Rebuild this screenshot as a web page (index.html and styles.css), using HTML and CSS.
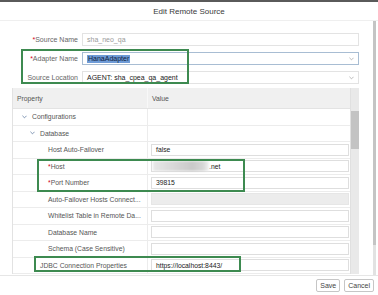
FILE: index.html
```html
<!DOCTYPE html>
<html>
<head>
<meta charset="utf-8">
<link rel="stylesheet" href="styles.css">
</head>
<body>
<div class="topbar"></div>
<div class="header">Edit Remote Source</div>
<div class="body">
  <div class="main">
    <div class="form">
      <div class="frow">
        <label class="flabel"><span class="req">*</span>Source Name</label>
        <div class="finput ro">sha_neo_qa</div>
      </div>
      <div class="frow">
        <label class="flabel"><span class="req">*</span>Adapter Name</label>
        <div class="finput focus"><span class="sel">HanaAdapter</span><svg class="dd" viewBox="0 0 6 4"><polyline points="0.5,0.5 3,3 5.5,0.5"/></svg></div>
      </div>
      <div class="frow">
        <label class="flabel">Source Location</label>
        <div class="finput">AGENT: sha_cpea_qa_agent<svg class="dd" viewBox="0 0 6 4"><polyline points="0.5,0.5 3,3 5.5,0.5"/></svg></div>
      </div>
    </div>
    <div class="table">
      <div class="tmain">
        <div class="thead">
          <div class="hcell">Property</div>
          <div class="hcell vcol">Value</div>
        </div>
        <div class="trow">
          <div class="pcell l1"><svg class="chev" viewBox="0 0 6 4"><polyline points="0.5,0.5 3,3 5.5,0.5"/></svg>Configurations</div>
          <div class="vcell"></div>
        </div>
        <div class="trow">
          <div class="pcell l2"><svg class="chev" viewBox="0 0 6 4"><polyline points="0.5,0.5 3,3 5.5,0.5"/></svg>Database</div>
          <div class="vcell"></div>
        </div>
        <div class="trow">
          <div class="pcell l3">Host Auto-Failover</div>
          <div class="vcell"><div class="vinput">false</div></div>
        </div>
        <div class="trow">
          <div class="pcell l3"><span class="req">*</span>Host</div>
          <div class="vcell"><div class="vinput"><span class="blur"></span>.net</div></div>
        </div>
        <div class="trow">
          <div class="pcell l3"><span class="req">*</span>Port Number</div>
          <div class="vcell"><div class="vinput">39815</div></div>
        </div>
        <div class="trow">
          <div class="pcell l3">Auto-Failover Hosts Connect...</div>
          <div class="vcell"><div class="vinput dis"></div></div>
        </div>
        <div class="trow">
          <div class="pcell l3">Whitelist Table in Remote Da...</div>
          <div class="vcell"><div class="vinput"></div></div>
        </div>
        <div class="trow">
          <div class="pcell l3">Database Name</div>
          <div class="vcell"><div class="vinput"></div></div>
        </div>
        <div class="trow">
          <div class="pcell l3">Schema (Case Sensitive)</div>
          <div class="vcell"><div class="vinput"></div></div>
        </div>
        <div class="trow">
          <div class="pcell l2leaf">JDBC Connection Properties</div>
          <div class="vcell"><div class="vinput">https://localhost:8443/</div></div>
        </div>
      </div>
      <div class="tscroll"><div class="tthumb"></div></div>
    </div>
  </div>
  <div class="vscroll"><div class="vthumb"></div></div>
  <div class="mark m1"></div>
  <div class="mark m2"></div>
  <div class="mark m3"></div>
</div>
<div class="footer">
  <button class="btn">Save</button>
  <button class="btn">Cancel</button>
</div>
</body>
</html>
```
FILE: styles.css
```css
html, body {
  margin: 0;
  padding: 0;
}
body {
  width: 378px;
  height: 295px;
  overflow: hidden;
  background: #fff;
  font-family: "Liberation Sans", Arial, sans-serif;
  color: #333;
}
.topbar {
  height: 2px;
  background: #5a5a5a;
}
.header {
  height: 18px;
  display: flex;
  align-items: center;
  justify-content: center;
  font-size: 8px;
  color: #3a3a3a;
  border-bottom: 1px solid #efefef;
}
.body {
  position: relative;
  display: flex;
  height: 254px;
}
.main {
  width: 373px;
  padding-top: 12px;
  box-sizing: border-box;
}
.form {
  display: flex;
  flex-direction: column;
  gap: 6px;
  padding-right: 14px;
}
.frow {
  display: flex;
  align-items: center;
  height: 13px;
}
.flabel {
  width: 78px;
  padding-right: 4px;
  box-sizing: content-box;
  text-align: right;
  font-size: 7px;
  color: #666;
  white-space: nowrap;
}
.req {
  color: #d0021b;
}
.finput {
  flex: 1;
  height: 13px;
  box-sizing: border-box;
  border: 1px solid #e3e3e3;
  display: flex;
  align-items: center;
  padding-left: 4px;
  font-size: 7px;
  color: #222;
  position: relative;
}
.finput.ro {
  color: #9a9a9a;
}
.finput.focus {
  border-color: #a8bdd3;
}
.sel {
  background: #6f9bd6;
  color: #0d2040;
  padding: 0 1px;
  line-height: 8px;
}
.dd {
  position: absolute;
  right: 4px;
  top: 4px;
  width: 5px;
  height: 4px;
  fill: none;
  stroke: #9a9a9a;
  stroke-width: 0.8;
}
.table {
  display: flex;
  margin: 4px 14px 0 12px;
  height: 186px;
  border-left: 1px solid #e2e2e2;
}
.tmain {
  flex: 1;
  display: flex;
  flex-direction: column;
}
.thead {
  display: grid;
  grid-template-columns: 134px 1fr;
  height: 21px;
  background: #f0f0f0;
  border-bottom: 1px solid #e3e3e3;
  box-sizing: border-box;
}
.hcell {
  display: flex;
  align-items: center;
  padding-left: 4px;
  font-size: 6.8px;
  color: #555;
}
.hcell.vcol {
  border-left: 1px solid #f8f8f8;
  padding-left: 4px;
}
.trow {
  display: grid;
  grid-template-columns: 134px 1fr;
  height: 16.5px;
  border-bottom: 1px solid #ececec;
  box-sizing: border-box;
}
.pcell {
  display: flex;
  align-items: center;
  font-size: 6.8px;
  color: #555;
  white-space: nowrap;
  overflow: hidden;
}
.pcell.l1 { padding-left: 9px; }
.pcell.l2 { padding-left: 17px; }
.pcell.l3 { padding-left: 35px; }
.pcell.l2leaf { padding-left: 27px; }
.chev {
  width: 5px;
  height: 4px;
  margin-right: 5px;
  fill: none;
  stroke: #56739a;
  stroke-width: 0.9;
}
.vcell {
  border-left: 1px solid #ececec;
  display: flex;
  align-items: center;
  padding: 0 1px 0 3px;
}
.vinput {
  flex: 1;
  height: 12px;
  box-sizing: border-box;
  border: 1px solid #dedede;
  display: flex;
  align-items: center;
  padding-left: 4px;
  font-size: 6.8px;
  color: #222;
}
.vinput.dis {
  background: #ececec;
  border-color: #e6e6e6;
}
.blur {
  width: 56px;
  height: 10px;
  margin-left: -3px;
  background: linear-gradient(90deg, #e8e8e8, #c9c9c9 70%, #d8d8d8 90%, #f2f2f2);
  filter: blur(1px);
}
.tscroll {
  width: 9px;
  background: #e9e9e9;
  border-left: 1px solid #e0e0e0;
  box-sizing: border-box;
}
.tthumb {
  margin-top: 23px;
  height: 38px;
  background: #c3c3c3;
}
.vscroll {
  width: 3px;
  background: #e2e2e2;
}
.vthumb {
  height: 224px;
  background: #c4c4c4;
}
.mark {
  position: absolute;
  border: 2px solid #3d8a50;
  box-sizing: border-box;
  pointer-events: none;
}
.m1 { left: 21px; top: 28px; width: 168px; height: 35px; }
.m2 { left: 37px; top: 138px; width: 208px; height: 33px; }
.m3 { left: 34px; top: 235px; width: 207px; height: 16px; }
.footer {
  border-top: 1px solid #e6e6e6;
  display: flex;
  justify-content: flex-end;
  gap: 4px;
  padding: 3px 4px 0 0;
  height: 20px;
  box-sizing: border-box;
}
.btn {
  height: 13px;
  padding: 0 3px;
  border: 1px solid #c6c6c6;
  border-radius: 2px;
  background: #fff;
  font-family: "Liberation Sans", Arial, sans-serif;
  font-size: 7px;
  color: #444;
  line-height: 11px;
}
```
